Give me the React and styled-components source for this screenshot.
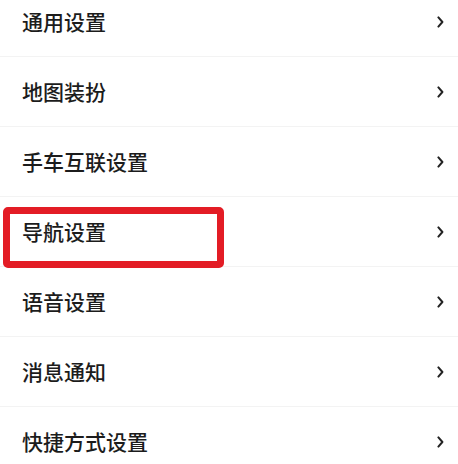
import { createGlobalStyle, styled } from 'styled-components'

const items = [
  '通用设置',
  '地图装扮',
  '手车互联设置',
  '导航设置',
  '语音设置',
  '消息通知',
  '快捷方式设置',
]

const App = () => {
  return (
    <>
      <GlobalStyle />
      <Page>
        <List>
          {items.map((label) => (
            <Row key={label}>
              <Label>{label}</Label>
              <Chevron width='7' height='12' viewBox='0 0 7 12'>
                <path d='M1.4 1.4 L5.4 6 L1.4 10.6' />
              </Chevron>
              {label === '导航设置' && <Highlight />}
            </Row>
          ))}
        </List>
      </Page>
    </>
  )
}

const GlobalStyle = createGlobalStyle`
  html, body {
    margin: 0;
    padding: 0;
    background: #fff;
  }
  body {
    font-family: "Noto Sans CJK SC", "Noto Sans", sans-serif;
  }
`

const Page = styled.div`
  width: 458px;
  height: 464px;
  overflow: hidden;
  background: #fff;
`

const List = styled.div`
  display: flex;
  flex-direction: column;
  margin-top: -13px;
`

const Row = styled.div`
  position: relative;
  display: flex;
  align-items: center;
  justify-content: space-between;
  height: 70px;
  box-sizing: border-box;
  padding: 0 14px 0 22px;
  border-bottom: 1px solid #f3f3f3;
`

const Label = styled.span`
  font-size: 21px;
  font-weight: 500;
  line-height: 1;
  color: #1c1c1c;
`

const Chevron = styled.svg`
  fill: none;
  stroke: #222;
  stroke-width: 2;
  stroke-linecap: round;
  stroke-linejoin: round;
`

// red annotation drawn over the row
const Highlight = styled.div`
  position: absolute;
  left: 3px;
  top: 10px;
  width: 221px;
  height: 61px;
  box-sizing: border-box;
  border: 7px solid #e31c25;
  border-radius: 5px;
  pointer-events: none;
`

export default App
